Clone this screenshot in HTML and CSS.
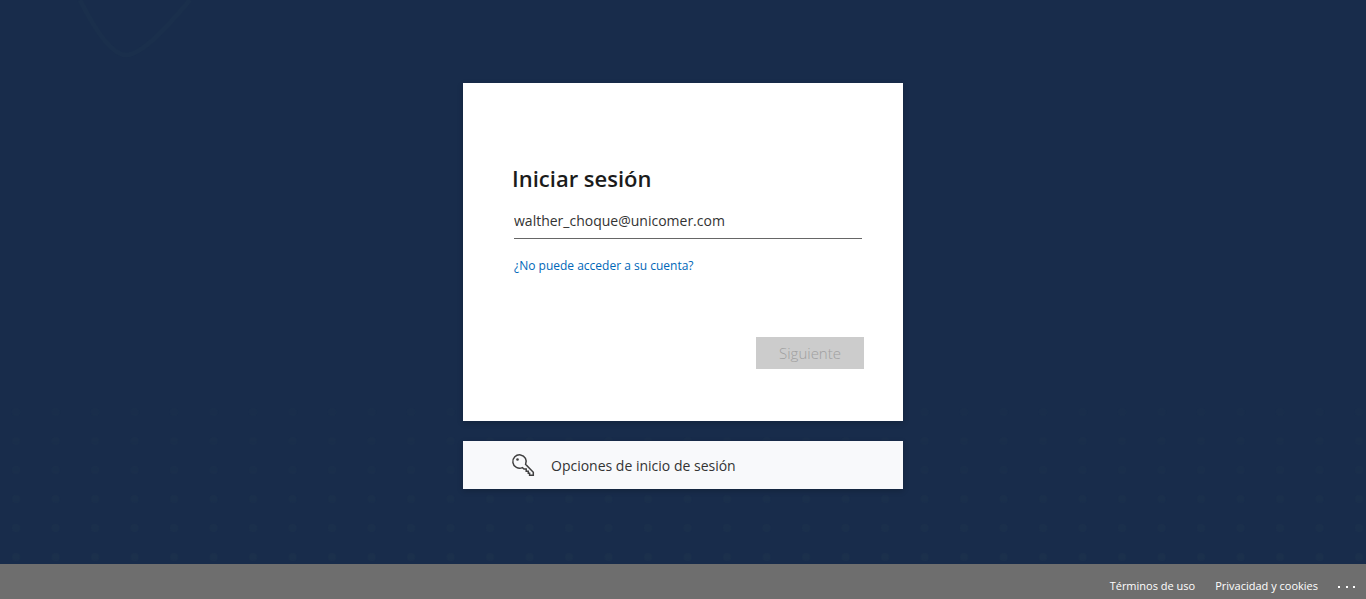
FILE: index.html
```html
<!DOCTYPE html>
<html lang="es">
<head>
<meta charset="utf-8">
<meta name="viewport" content="width=device-width, initial-scale=1">
<title>Iniciar sesión</title>
<link rel="stylesheet" href="styles.css">
</head>
<body>
<svg class="backdrop" aria-hidden="true">
  <defs>
    <pattern id="dots" width="39.5" height="29" patternUnits="userSpaceOnUse" x="-4" y="21">
      <circle cx="20" cy="14" r="4"/>
    </pattern>
    <linearGradient id="fade" x1="0" y1="0" x2="0" y2="1">
      <stop offset="0" stop-color="#fff" stop-opacity="0.4"/>
      <stop offset="1" stop-color="#fff"/>
    </linearGradient>
    <mask id="lower"><rect y="400" width="100%" height="170" fill="url(#fade)"/></mask>
  </defs>
  <path class="arc" d="M80 0C96 32 112 55 126 55C142 55 168 26 190 0"/>
  <rect y="400" width="100%" height="170" fill="url(#dots)" mask="url(#lower)"/>
</svg>
<main class="page">
  <form class="card signin">
    <h1 class="title">Iniciar sesión</h1>
    <input class="email" type="email" aria-label="Correo electrónico" value="walther_choque@unicomer.com">
    <a class="help" href="#">¿No puede acceder a su cuenta?</a>
    <button class="next" type="submit" disabled>Siguiente</button>
  </form>
  <button class="card options" type="button">
    <svg class="key" viewBox="0 0 24 24" aria-hidden="true">
      <path d="M14.6 11.4A6.7 6.7 0 1 0 11.4 14.6L13 16.1H15.2V18.3H17.3V20.3H18.6V22.3H22.3V19.2Z"/>
      <circle cx="6.5" cy="6.5" r="1.3"/>
    </svg>
    <span>Opciones de inicio de sesión</span>
  </button>
</main>
<footer class="footer">
  <a href="#">Términos de uso</a>
  <a href="#">Privacidad y cookies</a>
  <button class="more" type="button" aria-label="Más opciones">
    <svg viewBox="0 0 18 4" aria-hidden="true"><path d="M0 2h2v2H0zM8 2h2v2H8zM15 2h2v2h-2z"/></svg>
  </button>
</footer>
</body>
</html>
```
FILE: styles.css
```css
* {
  box-sizing: border-box;
}

body {
  margin: 0;
  min-height: 100vh;
  display: flex;
  flex-direction: column;
  background: #182c4b;
  color: #333;
  font-family: "Segoe UI", "Open Sans", "Noto Sans", sans-serif;
  font-size: 14px;
}

button,
input {
  font: inherit;
  color: inherit;
  border: 0;
  border-radius: 0;
}

a {
  text-decoration: none;
}

.backdrop {
  position: absolute;
  inset: 0;
  width: 100%;
  height: 100%;
  z-index: -1;
  fill: #1b304c;
}

.arc {
  fill: none;
  stroke: #1a2f4c;
  stroke-width: 5;
}

.page {
  flex: 1;
  display: flex;
  flex-direction: column;
  align-items: center;
  justify-content: center;
  gap: 20px;
  padding-top: 8px;
}

.card {
  width: 100%;
  max-width: 440px;
  background: #fff;
  box-shadow: 0 2px 6px rgba(0, 0, 0, 0.2);
}

.signin {
  display: flex;
  flex-direction: column;
  align-items: flex-start;
  padding: 79px 39px 52px 49px;
}

.title {
  margin: 0;
  color: #1b1b1b;
  font-size: 22px;
  font-weight: 600;
  line-height: 32px;
}

.email {
  align-self: stretch;
  height: 36px;
  margin: 9px 2px 17px;
  padding: 0;
  border-bottom: 1px solid #666;
  outline: 0;
  background: transparent;
}

.help {
  margin-left: 2px;
  color: #0067b8;
  font-size: 12px;
  line-height: 20px;
}

.next {
  align-self: flex-end;
  width: 108px;
  height: 32px;
  margin-top: 61px;
  background: #ccc;
  color: #a0a0a0;
  font-size: 15px;
  font-weight: 300;
}

.options {
  display: flex;
  align-items: center;
  gap: 16px;
  height: 48px;
  padding: 0 48px;
  background: #f8f9fb;
  text-align: left;
}

.key {
  width: 24px;
  height: 24px;
  fill: none;
  stroke: #404040;
  stroke-width: 1.5;
}

.key circle {
  fill: #404040;
  stroke: none;
}

.footer {
  display: flex;
  align-items: center;
  justify-content: flex-end;
  gap: 20px;
  height: 35px;
  padding: 8px 10px 0;
  background: #6e6e6e;
  color: #fff;
  font-size: 11px;
}

.footer a {
  color: inherit;
}

.more {
  display: flex;
  padding: 0;
  background: transparent;
}

.more svg {
  width: 18px;
  height: 4px;
  fill: #fff;
}
```
